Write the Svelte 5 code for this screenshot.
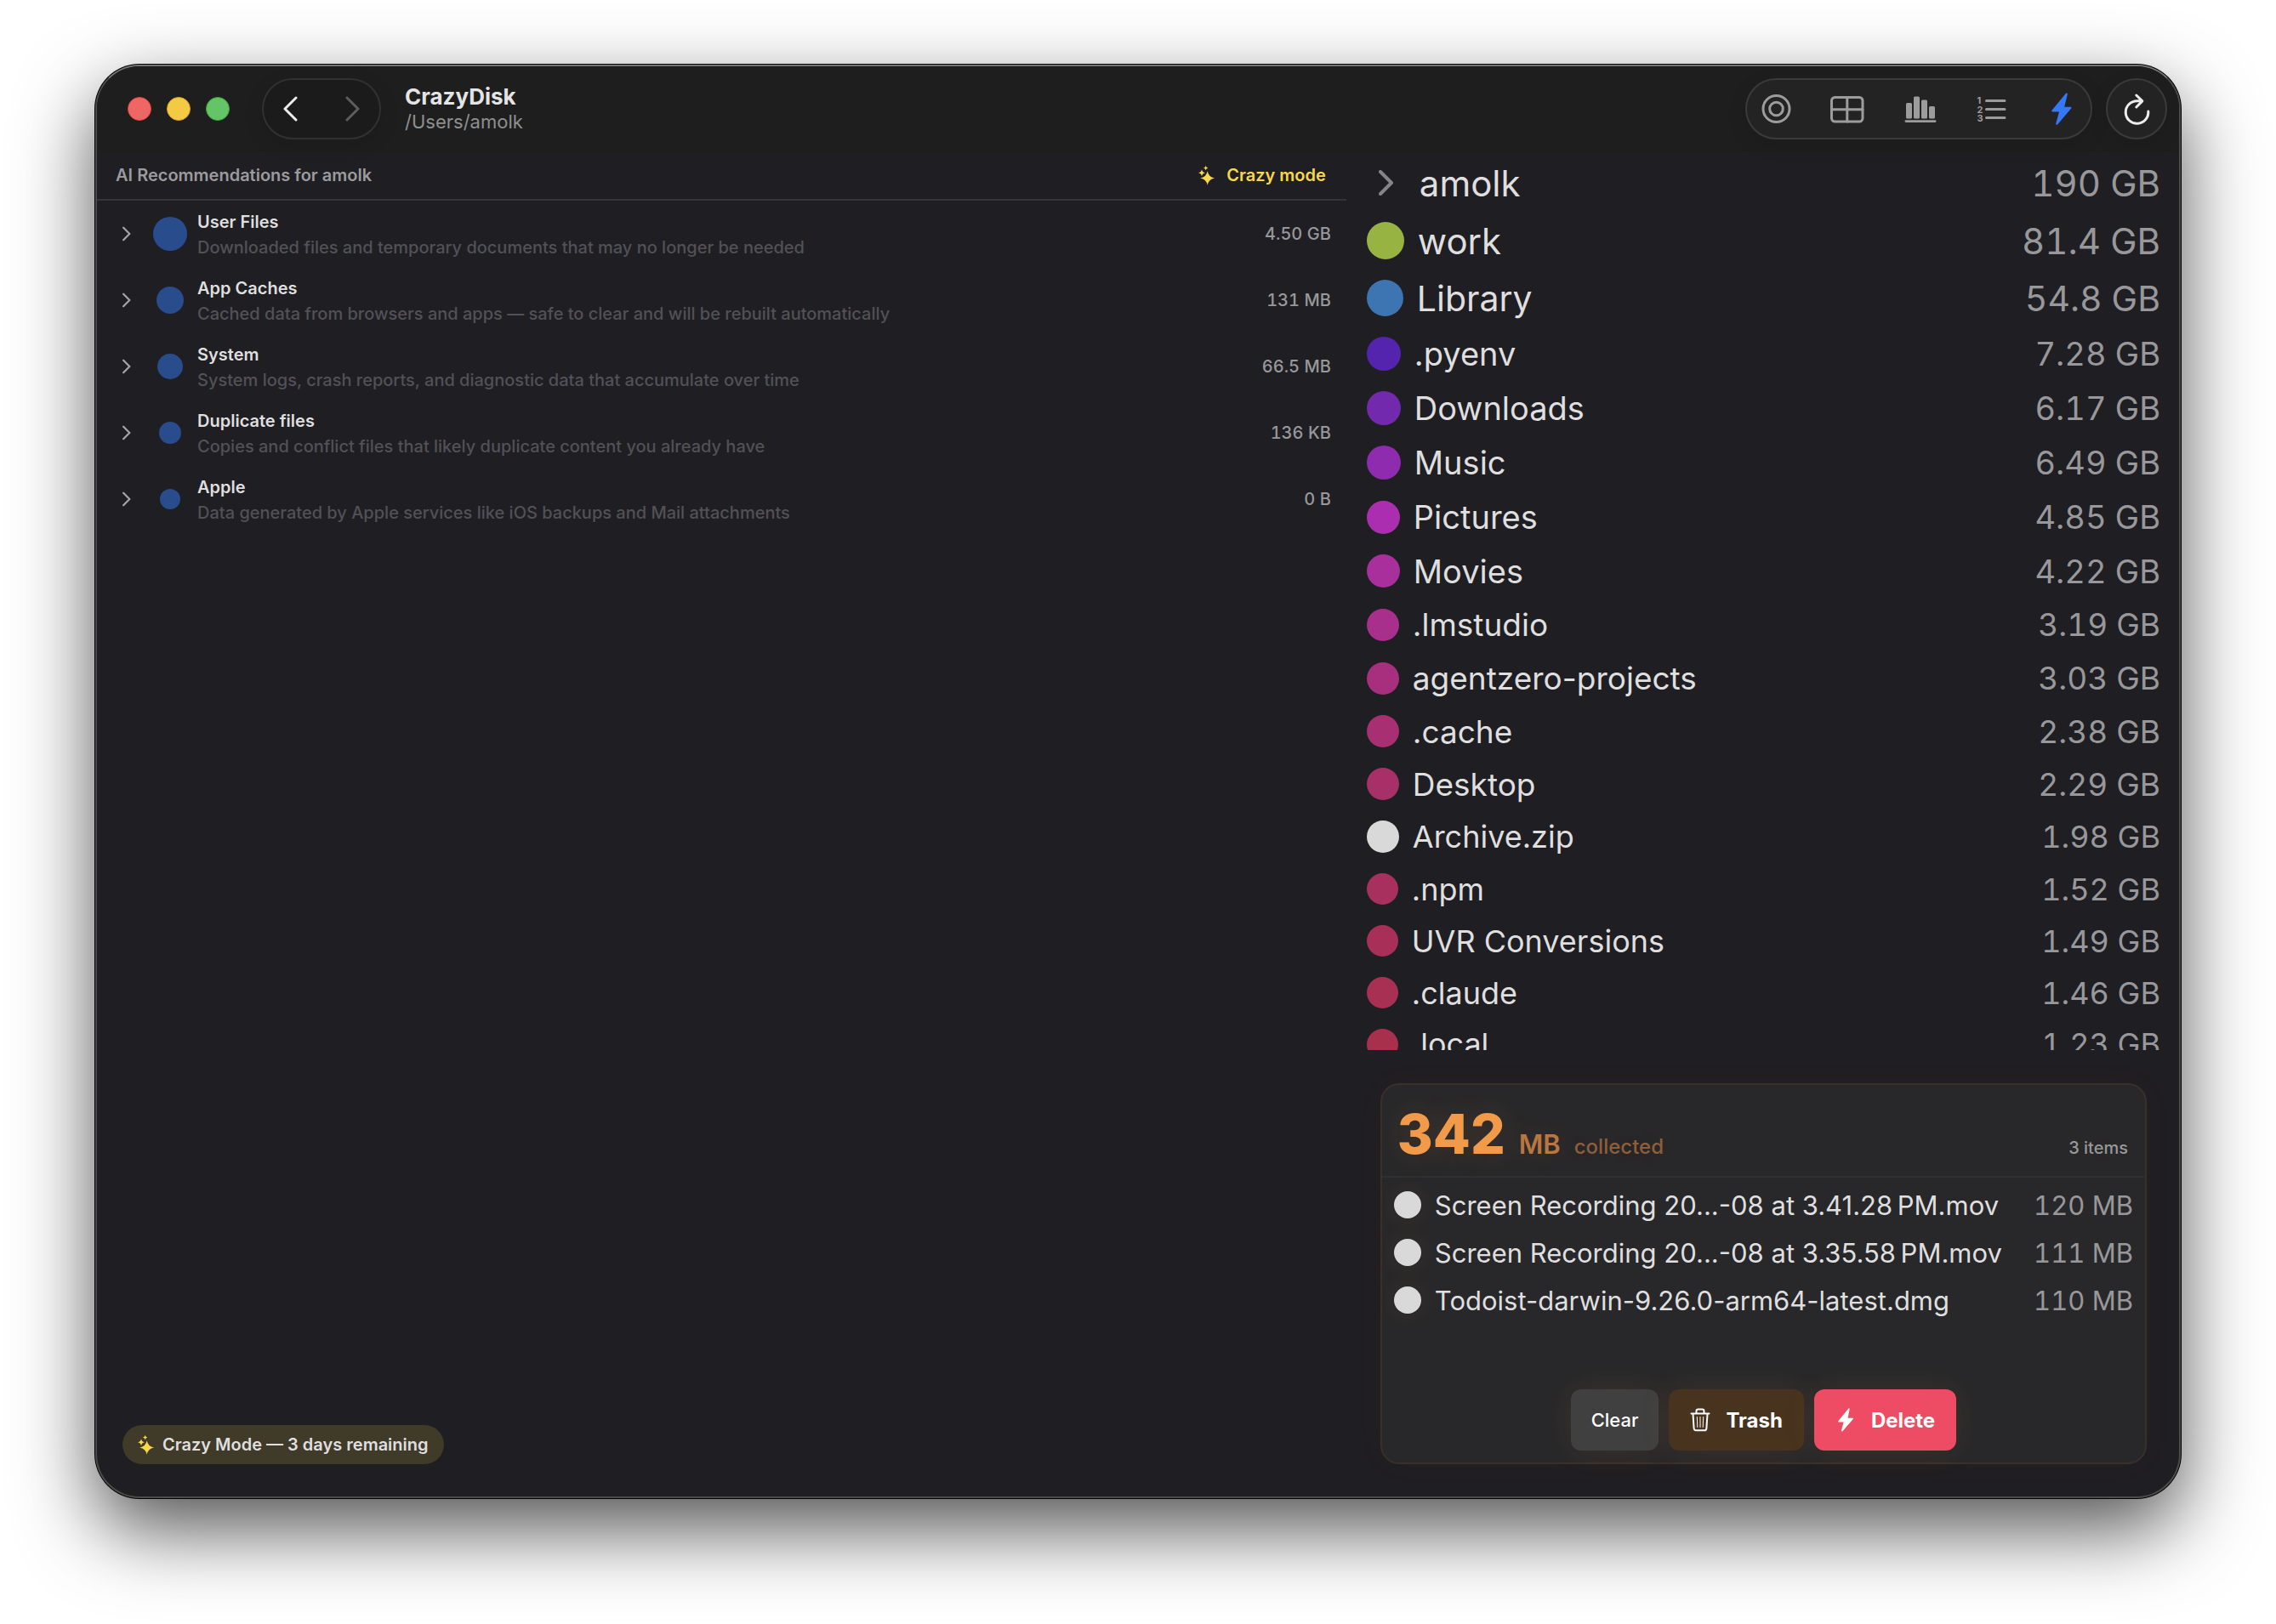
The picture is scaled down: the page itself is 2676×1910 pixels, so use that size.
<script lang="ts">
	type Recommendation = { name: string; detail: string; size: string; dot: number };
	type Entry = { name: string; size: string; color?: string; dot: number; row: number; text: number };

	const recommendations: Recommendation[] = [
		{ name: 'User Files', detail: 'Downloaded files and temporary documents that may no longer be needed', size: '4.50 GB', dot: 40 },
		{ name: 'App Caches', detail: 'Cached data from browsers and apps — safe to clear and will be rebuilt automatically', size: '131 MB', dot: 32 },
		{ name: 'System', detail: 'System logs, crash reports, and diagnostic data that accumulate over time', size: '66.5 MB', dot: 30 },
		{ name: 'Duplicate files', detail: 'Copies and conflict files that likely duplicate content you already have', size: '136 KB', dot: 26 },
		{ name: 'Apple', detail: 'Data generated by Apple services like iOS backups and Mail attachments', size: '0 B', dot: 24 }
	];

	// row, dot and text sizes shrink with the size on disk
	const entries: Entry[] = [
		{ name: 'amolk', size: '190 GB', dot: 44, row: 68, text: 42 },
		{ name: 'work', size: '81.4 GB', color: '#97b341', dot: 44, row: 68, text: 42 },
		{ name: 'Library', size: '54.8 GB', color: '#3d74b2', dot: 43, row: 67, text: 41 },
		{ name: '.pyenv', size: '7.28 GB', color: '#5524ae', dot: 40, row: 64, text: 38 },
		{ name: 'Downloads', size: '6.17 GB', color: '#7229ae', dot: 40, row: 64, text: 38 },
		{ name: 'Music', size: '6.49 GB', color: '#8f2bae', dot: 40, row: 64, text: 38 },
		{ name: 'Pictures', size: '4.85 GB', color: '#ab2eb0', dot: 39, row: 64, text: 38 },
		{ name: 'Movies', size: '4.22 GB', color: '#a82f9c', dot: 39, row: 63, text: 38 },
		{ name: '.lmstudio', size: '3.19 GB', color: '#a82f8c', dot: 38, row: 63, text: 37 },
		{ name: 'agentzero-projects', size: '3.03 GB', color: '#a82f7e', dot: 38, row: 63, text: 37 },
		{ name: '.cache', size: '2.38 GB', color: '#a83072', dot: 38, row: 62, text: 37 },
		{ name: 'Desktop', size: '2.29 GB', color: '#a83068', dot: 38, row: 62, text: 37 },
		{ name: 'Archive.zip', size: '1.98 GB', color: '#d9d9d9', dot: 38, row: 62, text: 36 },
		{ name: '.npm', size: '1.52 GB', color: '#a8305e', dot: 37, row: 61, text: 36 },
		{ name: 'UVR Conversions', size: '1.49 GB', color: '#a83058', dot: 37, row: 61, text: 36 },
		{ name: '.claude', size: '1.46 GB', color: '#a83052', dot: 37, row: 61, text: 36 },
		{ name: '.local', size: '1.23 GB', color: '#a8304d', dot: 37, row: 60, text: 36 }
	];

	const collected = [
		{ name: 'Screen Recording 20...-08 at 3.41.28\u202fPM.mov', size: '120 MB' },
		{ name: 'Screen Recording 20...-08 at 3.35.58\u202fPM.mov', size: '111 MB' },
		{ name: 'Todoist-darwin-9.26.0-arm64-latest.dmg', size: '110 MB' }
	];

	let view = $state('crazy');

	function star(cx: number, cy: number, r: number) {
		const k = r * 0.16;
		return `M${cx} ${cy - r}Q${cx + k} ${cy - k} ${cx + r} ${cy}Q${cx + k} ${cy + k} ${cx} ${cy + r}Q${cx - k} ${cy + k} ${cx - r} ${cy}Q${cx - k} ${cy - k} ${cx} ${cy - r}Z`;
	}
	const sparkles = star(32, 43, 25) + star(12, 24, 12) + star(26, 7, 8);
</script>

{#snippet chevron(cls: string)}
	<svg class={cls} viewBox="0 0 18 30" aria-hidden="true"><path d="M2 2 15 15 2 28" /></svg>
{/snippet}

{#snippet sparkle()}
	<svg class="sparkle" viewBox="0 0 57 68" aria-hidden="true"><path d={sparkles} /></svg>
{/snippet}

<main class="desktop">
	<div class="window">
		<header class="toolbar">
			<div class="lights">
				<button class="light close" aria-label="Close"></button>
				<button class="light minimize" aria-label="Minimize"></button>
				<button class="light zoom" aria-label="Zoom"></button>
			</div>
			<nav class="history">
				<button aria-label="Back">
					<svg viewBox="0 0 18 30"><path d="M16 2 3 15 16 28" /></svg>
				</button>
				<button class="dim" aria-label="Forward">
					<svg viewBox="0 0 18 30"><path d="M2 2 15 15 2 28" /></svg>
				</button>
			</nav>
			<div class="heading">
				<h1>CrazyDisk</h1>
				<p>/Users/amolk</p>
			</div>
			<div class="views">
				<button class:active={view === 'rings'} onclick={() => (view = 'rings')} aria-label="Rings">
					<svg viewBox="0 0 48 48"><circle cx="24.5" cy="24" r="15.5" /><circle cx="24.5" cy="24" r="7.8" /></svg>
				</button>
				<button class:active={view === 'grid'} onclick={() => (view = 'grid')} aria-label="Grid">
					<svg viewBox="0 0 48 48"><rect x="5.5" y="10.5" width="36.5" height="28.5" rx="4" /><path d="M23.8 11v28M6 24.8h36" /></svg>
				</button>
				<button class:active={view === 'bars'} onclick={() => (view = 'bars')} aria-label="Bars">
					<svg viewBox="0 0 48 48">
						<g class="solid">
							<rect x="9" y="17" width="7" height="18.5" rx="1.5" />
							<rect x="18" y="9.5" width="7" height="26" rx="1.5" />
							<rect x="27" y="13.5" width="7" height="22" rx="1.5" />
							<rect x="36" y="21" width="7" height="14.5" rx="1.5" />
							<rect x="7.5" y="37.2" width="37" height="2.8" rx="1.4" />
						</g>
					</svg>
				</button>
				<button class:active={view === 'list'} onclick={() => (view = 'list')} aria-label="List">
					<svg viewBox="0 0 48 48">
						<path d="M19.5 14.5h21.5M19.5 24.5h21.5M19.5 34.5h21.5" />
						<g class="digits"><text x="8.5" y="18.3">1</text><text x="8.5" y="28.5">2</text><text x="8.5" y="38.5">3</text></g>
					</svg>
				</button>
				<button class:active={view === 'crazy'} onclick={() => (view = 'crazy')} aria-label="Crazy mode view">
					<svg viewBox="0 0 48 48"><path class="solid" d="M29.2 5.6 12.3 26Q11.7 27.3 13 27.4H21L17.2 41.5Q17.3 43.8 19.3 42.2L35.4 23.2Q36 21.8 34.6 21.7H27.2L30.8 7Q30.8 4.7 29.2 5.6Z" /></svg>
				</button>
			</div>
			<button class="refresh" aria-label="Refresh">
				<svg viewBox="0 0 48 48"><path d="M37.8 27A13.3 13.3 0 1 1 24.5 14.7H30M23.8 8 30.8 14.9 23.8 22" /></svg>
			</button>
		</header>

		<div class="panes">
			<section class="recommendations">
				<div class="pane-head">
					<h2>AI Recommendations for amolk</h2>
					<button class="crazy-mode">{@render sparkle()}Crazy mode</button>
				</div>
				<ul class="groups">
					{#each recommendations as item (item.name)}
						<li>
							<button class="group">
								{@render chevron('disclose')}
								<span class="bubble"><span class="dot" style="width: {item.dot}px; height: {item.dot}px;"></span></span>
								<span class="about">
									<span class="name">{item.name}</span>
									<span class="detail">{item.detail}</span>
								</span>
								<span class="amount">{item.size}</span>
							</button>
						</li>
					{/each}
				</ul>
				<div class="badge">{@render sparkle()}Crazy Mode — 3 days remaining</div>
			</section>

			<aside class="side">
				<ul class="entries">
					{#each entries as entry (entry.name)}
						<li>
							<button class="entry" style="height: {entry.row}px; font-size: {entry.text}px;">
								{#if entry.color}
									<span class="dot" style="width: {entry.dot}px; height: {entry.dot}px; background: {entry.color};"></span>
								{:else}
									<span class="open">{@render chevron('wide')}</span>
								{/if}
								<span class="label">{entry.name}</span>
								<span class="size">{entry.size}</span>
							</button>
						</li>
					{/each}
				</ul>

				<section class="collector">
					<div class="summary">
						<strong>342</strong>
						<span class="unit">MB</span>
						<span class="state">collected</span>
						<span class="count">3 items</span>
					</div>
					<ul class="files">
						{#each collected as file (file.name)}
							<li>
								<span class="dot"></span>
								<span class="label">{file.name}</span>
								<span class="size">{file.size}</span>
							</li>
						{/each}
					</ul>
					<div class="actions">
						<button class="clear">Clear</button>
						<button class="trash">
							<svg viewBox="0 0 24 28" aria-hidden="true">
								<path d="M1.5 6.5H22.5M7.5 6V3.5Q7.5 1.5 9.5 1.5H14.5Q16.5 1.5 16.5 3.5V6M3.5 7 4.6 23.8Q4.8 26.3 7 26.3H17Q19.2 26.3 19.4 23.8L20.5 7" />
								<path class="thin" d="M8.3 10.5 8.8 22.5M12 10.5V22.5M15.7 10.5 15.2 22.5" />
							</svg>
							Trash
						</button>
						<button class="delete">
							<svg viewBox="0 0 24 28" aria-hidden="true"><path class="solid" d="M15.4.4 3.3 15.2Q2.8 16.4 4 16.5H9.6L7 26.5Q7.1 28.4 8.6 27L20.8 13Q21.3 11.8 20.2 11.7H14.6L16.6 1.5Q16.5-.4 15.4.4Z" /></svg>
							Delete
						</button>
					</div>
				</section>
			</aside>
		</div>
	</div>
</main>

<style>
	:global(body) {
		background: #fff;
	}

	.desktop {
		box-sizing: border-box;
		height: 100vh;
		padding: 76px 112px 148px;
		font-family: Inter, 'Liberation Sans', sans-serif;
		color: #dfdfdf;
	}

	button {
		padding: 0;
		border: 0;
		background: none;
		color: inherit;
		font: inherit;
		text-align: left;
		cursor: pointer;
	}

	h1,
	h2,
	p,
	ul {
		margin: 0;
		padding: 0;
		list-style: none;
	}

	svg {
		fill: none;
		stroke: currentColor;
		stroke-width: 3;
		stroke-linecap: round;
		stroke-linejoin: round;
		flex: none;
	}

	.solid {
		fill: currentColor;
		stroke: none;
	}

	.dot {
		flex: none;
		border-radius: 50%;
	}

	.window {
		box-sizing: border-box;
		height: 100%;
		display: flex;
		flex-direction: column;
		overflow: hidden;
		border: 2px solid #4b4b4c;
		border-top-color: #737373;
		border-radius: 52px;
		background: #1f1e23;
		box-shadow:
			0 0 0 1px #000,
			0 36px 92px rgba(0, 0, 0, 0.68);
	}

	.toolbar {
		flex: none;
		box-sizing: border-box;
		height: 100px;
		display: flex;
		align-items: center;
		padding: 0 14px 0 36px;
		background: #1e1e1e;
	}

	.lights {
		display: flex;
		gap: 18px;
	}

	.light {
		box-sizing: border-box;
		width: 28px;
		height: 28px;
		border: 1px solid #e0443e;
		border-radius: 50%;
		background: #ee6765;
	}

	.light.minimize {
		border-color: #dea123;
		background: #f4c944;
	}

	.light.zoom {
		border-color: #3aa83a;
		background: #65c466;
	}

	.history,
	.views,
	.refresh {
		box-sizing: border-box;
		height: 72px;
		border: 2px solid #3a3a3a;
		border-radius: 36px;
		background: #232323;
		box-shadow: 0 6px 24px rgba(0, 0, 0, 0.1);
	}

	.history {
		display: flex;
		align-items: center;
		justify-content: space-between;
		width: 140px;
		margin: 0 28px 0 38px;
		padding: 0 22px;
		border-color: #313131;
		background: #1b1b1b;
	}

	.history svg {
		display: block;
		width: 18px;
		height: 30px;
		color: #ececec;
	}

	.history .dim svg {
		color: #5d5d5d;
	}

	.heading {
		flex: 1;
	}

	h1 {
		font-size: 26px;
		font-weight: 700;
		line-height: 30px;
		color: #e4e4e4;
	}

	.heading p {
		font-size: 22px;
		line-height: 28px;
		color: #8f8f8f;
	}

	.views {
		display: flex;
		align-items: center;
		gap: 36px;
		margin-right: 16px;
		padding: 0 10px;
		color: #9c9c9c;
	}

	.views svg,
	.refresh svg {
		display: block;
		width: 48px;
		height: 48px;
	}

	.views .active {
		color: #3478f6;
	}

	.digits {
		fill: currentColor;
		stroke: none;
		font-size: 11px;
		font-weight: 700;
	}

	.refresh {
		display: flex;
		align-items: center;
		justify-content: center;
		width: 72px;
		color: #ededed;
	}

	.panes {
		flex: 1;
		min-height: 0;
		display: grid;
		grid-template-columns: minmax(0, 3fr) minmax(0, 2fr);
	}

	.recommendations {
		display: flex;
		flex-direction: column;
		align-items: flex-start;
	}

	.pane-head {
		box-sizing: border-box;
		width: 100%;
		height: 58px;
		display: flex;
		align-items: center;
		justify-content: space-between;
		padding: 0 24px 0 22px;
		border-bottom: 2px solid #353439;
	}

	h2 {
		font-size: 20px;
		font-weight: 600;
		color: #9b9b9d;
	}

	.sparkle {
		width: 19px;
		height: 23px;
		fill: #f8d84a;
		stroke: none;
	}

	.crazy-mode {
		display: flex;
		align-items: center;
		gap: 14px;
		font-size: 20px;
		font-weight: 600;
		color: #f8d84a;
	}

	.groups {
		width: 100%;
	}

	.group {
		box-sizing: border-box;
		width: 100%;
		height: 78px;
		display: flex;
		align-items: center;
		padding: 0 18px 0 30px;
	}

	.disclose {
		width: 10px;
		height: 18px;
		color: #a5a5a7;
		stroke-width: 4;
	}

	.bubble {
		flex: none;
		display: flex;
		justify-content: center;
		width: 40px;
		margin: 0 12px 0 26px;
	}

	.bubble .dot {
		background: #294c8d;
	}

	.about {
		flex: 1;
		display: flex;
		flex-direction: column;
		padding-top: 2px;
		font-size: 20px;
		line-height: 30px;
	}

	.name {
		font-weight: 600;
	}

	.detail {
		font-weight: 500;
		color: #525156;
	}

	.amount {
		font-size: 20px;
		font-weight: 500;
		font-variant-numeric: tabular-nums;
		color: #98989a;
	}

	.badge {
		display: flex;
		align-items: center;
		gap: 10px;
		height: 46px;
		margin: auto 0 38px 30px;
		padding: 0 18px;
		border-radius: 23px;
		background: #403a29;
		font-size: 20px;
		font-weight: 600;
	}

	.side {
		min-height: 0;
		display: flex;
		flex-direction: column;
	}

	.entries {
		flex: 1 1 0;
		min-height: 0;
		overflow: hidden;
		padding: 3px 22px 0 24px;
	}

	.entry {
		width: 100%;
		display: flex;
		align-items: center;
		gap: 16px;
	}

	.open {
		display: flex;
		justify-content: center;
		width: 46px;
	}

	.wide {
		width: 18px;
		height: 30px;
		color: #858587;
		stroke-width: 4;
	}

	.label {
		flex: 1;
		white-space: nowrap;
	}

	.size {
		font-variant-numeric: tabular-nums;
		color: #98989a;
	}

	.collector {
		flex: none;
		margin: 39px 38px 38px 40px;
		border: 2px solid #3a302a;
		border-radius: 22px;
		background: #28282a;
		box-shadow: 0 0 40px rgba(240, 150, 70, 0.03);
	}

	.summary {
		display: flex;
		align-items: baseline;
		height: 107px;
		padding: 0 20px 0 18px;
		border-bottom: 2px solid #2f2f31;
		line-height: 116px;
		text-shadow: 0 0 36px rgba(240, 150, 70, 0.16);
	}

	.summary strong {
		font-size: 64px;
		font-weight: 800;
		color: #f19a4a;
	}

	.unit {
		margin-left: 16px;
		font-size: 31px;
		font-weight: 600;
		color: #b97641;
	}

	.state {
		margin-left: 16px;
		font-size: 24px;
		font-weight: 500;
		color: #8c5f3a;
	}

	.count {
		margin-left: auto;
		font-size: 20px;
		font-weight: 500;
		color: #98989a;
	}

	.files {
		min-height: 211px;
		padding: 4px 14px 0;
		font-size: 31px;
	}

	.files li {
		display: flex;
		align-items: center;
		gap: 16px;
		height: 56px;
	}

	.files .dot {
		width: 32px;
		height: 32px;
		background: #d9d9d9;
		box-shadow: 0 0 30px rgba(240, 150, 70, 0.1);
	}

	.actions {
		display: flex;
		justify-content: center;
		gap: 12px;
		padding: 34px 14px 14px;
	}

	.actions button {
		display: flex;
		align-items: center;
		gap: 18px;
		height: 72px;
		padding: 0 25px;
		border-radius: 12px;
		color: #fff;
		font-size: 24px;
		font-weight: 700;
		box-shadow: 0 0 36px rgba(240, 150, 70, 0.1);
	}

	.actions svg {
		width: 24px;
		height: 28px;
		stroke-width: 2;
	}

	.actions .thin {
		stroke-width: 1;
	}

	.actions .clear {
		padding: 0 24px;
		background: #404040;
		font-size: 22px;
		font-weight: 500;
	}

	.actions .trash {
		background: #47331e;
	}

	.actions .delete {
		background: #ee4c64;
	}
</style>
